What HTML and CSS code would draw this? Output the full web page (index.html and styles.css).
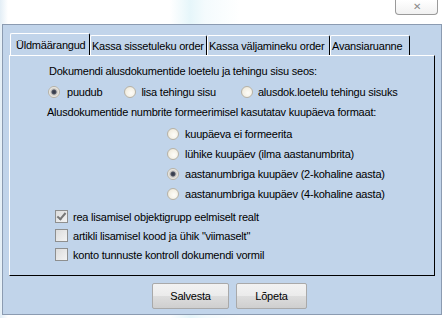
FILE: index.html
```html
<!doctype html>
<html>
<head>
<meta charset="UTF-8">
<title>Seaded</title>
<link rel="stylesheet" href="styles.css">
</head>
<body>
	<div class="titlebar">
		<div class="close">&#x2715;</div>
	</div>
	<div class="window">
		<div class="tabs">
			<div class="tab active">Üldmäärangud</div>
			<div class="tab tab2">Kassa sissetuleku order</div>
			<div class="tab tab3">Kassa väljamineku order</div>
			<div class="tab tab4">Avansiaruanne</div>
		</div>
		<div class="panel">
			<div class="line first">Dokumendi alusdokumentide loetelu ja tehingu sisu seos:</div>
			<div class="radiorow">
				<span class="opt opt1"><span class="radio on"></span>puudub</span>
				<span class="opt opt2"><span class="radio"></span>lisa tehingu sisu</span>
				<span class="opt opt3"><span class="radio"></span>alusdok.loetelu tehingu sisuks</span>
			</div>
			<div class="line second">Alusdokumentide numbrite formeerimisel kasutatav kuupäeva formaat:</div>
			<div class="formats">
				<div class="opt"><span class="radio"></span>kuupäeva ei formeerita</div>
				<div class="opt"><span class="radio"></span>lühike kuupäev (ilma aastanumbrita)</div>
				<div class="opt"><span class="radio on"></span>aastanumbriga kuupäev (2-kohaline aasta)</div>
				<div class="opt"><span class="radio"></span>aastanumbriga kuupäev (4-kohaline aasta)</div>
			</div>
			<div class="checks">
				<div class="check"><span class="box on"></span>rea lisamisel objektigrupp eelmiselt realt</div>
				<div class="check"><span class="box"></span>artikli lisamisel kood ja ühik "viimaselt"</div>
				<div class="check"><span class="box"></span>konto tunnuste kontroll dokumendi vormil</div>
			</div>
		</div>
		<div class="buttons">
			<button type="button" class="btn save">Salvesta</button>
			<button type="button" class="btn quit">Lõpeta</button>
		</div>
	</div>
</body>
</html>
```
FILE: styles.css
```css
html, body {
	margin:0;
	padding:0;
	}

body {
	width:444px;
	height:318px;
	overflow:hidden;
	font-family:"Liberation Sans", Arial, sans-serif;
	font-size:11px;
	letter-spacing:-0.22px;
	color:#000;
	background:linear-gradient(90deg, #e3eef6 0px, #ffffff 8px, #ffffff 170px, #e6f6fa 190px, #f4fbfd 205px, #ffffff 240px, #ffffff 444px);
	}

.titlebar {
	height:24px;
	display:flex;
	justify-content:flex-end;
	padding-right:6px;
	box-sizing:border-box;
	}

.close {
	width:41px;
	height:14px;
	border:1px solid #9a9a9a;
	border-top:none;
	border-radius:0 0 4px 4px;
	background:linear-gradient(#ffffff, #f1f1f1);
	color:#8a8a8a;
	font-size:10px;
	line-height:13px;
	text-align:center;
	}

.window {
	margin:0 2px 0 2px;
	height:291px;
	box-sizing:border-box;
	border:1px solid #8b9bb1;
	background:#c1d4ea;
	padding:8px 0 0 6px;
	}

.tabs {
	display:flex;
	align-items:flex-end;
	height:22px;
	padding-left:1px;
	}

.tab {
	height:20px;
	box-sizing:border-box;
	border-top:1px solid #fff;
	border-left:1px solid #fff;
	border-right:1px solid #000;
	border-radius:2px 2px 0 0;
	line-height:20px;
	padding:0 0 0 1px;
	white-space:nowrap;
	overflow:hidden;
	}

.tab.active {
	height:22px;
	width:80px;
	padding-left:5px;
	line-height:23px;
	}

.tab2 {
	width:117px;
	}

.tab3 {
	width:123px;
	}

.tab4 {
	width:80px;
	}

.panel {
	width:426px;
	height:221px;
	box-sizing:border-box;
	border-top:1px solid #fff;
	border-left:1px solid #fff;
	border-right:1px solid #000;
	border-bottom:1px solid #000;
	padding-top:5px;
	}

.line {
	height:20px;
	line-height:20px;
	white-space:nowrap;
	}

.line.first {
	padding-left:39px;
	}

.line.second {
	padding-left:37px;
	}

.radiorow {
	height:21px;
	display:flex;
	align-items:center;
	padding-left:38px;
	}

.opt {
	display:flex;
	align-items:center;
	white-space:nowrap;
	}

.opt2 {
	margin-left:22px;
	}

.opt3 {
	margin-left:25px;
	}

.radio {
	display:inline-block;
	width:12px;
	height:12px;
	box-sizing:border-box;
	border-radius:50%;
	border:1px solid #b7b2a6;
	background:radial-gradient(circle at 60% 60%, #fdfcf8 0%, #f3efe3 60%, #e2dccd 100%);
	margin-right:7px;
	}

.radiorow .opt1 .radio {
	margin-right:7px;
	}

.radiorow .opt2 .radio, .radiorow .opt3 .radio {
	margin-right:5px;
	}

.radio.on {
	background:radial-gradient(circle, #2d3340 0px, #4a5060 2px, #c6c4c0 3px, #f6f4ee 5px, #e9e4d8 100%);
	}

.formats {
	padding:2px 0 0 157px;
	}

.formats .opt {
	height:20px;
	}

.formats .radio {
	margin-right:6px;
	}

.checks {
	padding:3px 0 0 45px;
	}

.check {
	display:flex;
	align-items:center;
	height:19px;
	white-space:nowrap;
	}

.box {
	display:inline-block;
	width:13px;
	height:13px;
	box-sizing:border-box;
	border:1px solid #8e8f8f;
	background:linear-gradient(135deg, #dcdcdc, #f3f3f3);
	margin-right:5px;
	position:relative;
	}

.box.on::after {
	content:"";
	position:absolute;
	left:3px;
	top:0px;
	width:3px;
	height:7px;
	border-right:2px solid #777;
	border-bottom:2px solid #777;
	transform:rotate(40deg);
	}

.buttons {
	display:flex;
	gap:7px;
	padding:7px 0 0 143px;
	}

.btn {
	height:26px;
	font-family:"Liberation Sans", Arial, sans-serif;
	font-size:11px;
	letter-spacing:-0.22px;
	color:#000;
	border:1px solid #a9a9a9;
	border-radius:2px;
	background:linear-gradient(#f2f2f2 0%, #ebebeb 50%, #dddddd 51%, #cfcfcf 100%);
	padding:0;
	}

.save {
	width:77px;
	}

.quit {
	width:71px;
	}
```
